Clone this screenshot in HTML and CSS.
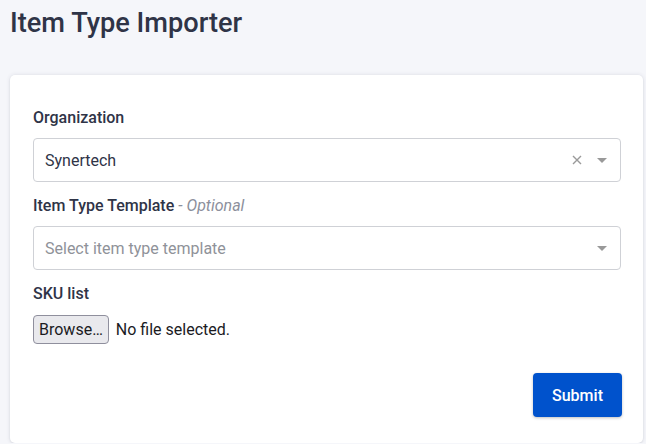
FILE: index.html
```html
<!DOCTYPE html>
<html lang="en">
<head>
<meta charset="utf-8">
<title>Item Type Importer</title>
<link rel="stylesheet" href="styles.css">
</head>
<body>
<main class="page">
  <h1 class="title">Item Type Importer</h1>
  <section class="card">
    <form class="form">
      <div class="field">
        <label class="label">Organization</label>
        <div class="select">
          <span class="value">Synertech</span>
          <span class="indicators">
            <svg class="clear" width="10" height="10" viewBox="0 0 10 10"><path d="M1 1 L9 9 M9 1 L1 9" stroke="#9a9a9a" stroke-width="1.4" fill="none"/></svg>
            <svg class="caret" width="10" height="6" viewBox="0 0 10 6"><path d="M0 0 H10 L5 5 Z" fill="#999"/></svg>
          </span>
        </div>
      </div>
      <div class="field">
        <label class="label">Item Type Template <em class="optional">- Optional</em></label>
        <div class="select">
          <span class="placeholder">Select item type template</span>
          <span class="indicators">
            <svg class="caret" width="10" height="6" viewBox="0 0 10 6"><path d="M0 0 H10 L5 5 Z" fill="#999"/></svg>
          </span>
        </div>
      </div>
      <div class="field file-field">
        <label class="label">SKU list</label>
        <div class="file">
          <button type="button" class="browse">Browse…</button>
          <span class="file-name">No file selected.</span>
        </div>
      </div>
      <div class="actions">
        <button type="button" class="submit">Submit</button>
      </div>
    </form>
  </section>
</main>
</body>
</html>
```

FILE: styles.css
```css
* { box-sizing: border-box; }
html, body { margin: 0; padding: 0; }
body {
  background: #f5f6fa;
  font-family: Roboto, "Liberation Sans", sans-serif;
  color: #2f3447;
}
.page {
  padding: 0 3px 0 10px;
}
.title {
  margin: 0;
  padding-top: 5px;
  font-size: 27.2px;
  line-height: 36px;
  font-weight: 500;
  color: #2f3447;
  height: 75px;
}
.card {
  background: #fff;
  border-radius: 5px;
  box-shadow: 0 0 4px rgba(40, 45, 70, 0.12), 0 1px 2px rgba(40, 45, 70, 0.08);
  padding: 32px 22px 26px 23px;
  height: 368px;
}
.form {
  display: flex;
  flex-direction: column;
}
.field {
  display: flex;
  flex-direction: column;
  gap: 9px;
  margin-bottom: 13px;
}
.file-field { gap: 10px; }
.label {
  font-size: 16px;
  line-height: 22px;
  font-weight: 500;
  color: #2f3447;
}
.optional {
  font-weight: 400;
  font-style: italic;
  color: #8c909c;
}
.select {
  height: 44px;
  border: 1px solid #cfd1d6;
  border-radius: 4px;
  display: flex;
  align-items: center;
  justify-content: space-between;
  padding: 0 13px 0 11px;
  font-size: 16px;
}
.value { color: #2f3447; }
.placeholder { color: #8f9299; }
.indicators {
  display: flex;
  align-items: center;
  gap: 15px;
}
.clear { display: block; }
.caret { display: block; margin-top: 1px; }
.file {
  display: flex;
  align-items: center;
  gap: 7px;
  font-size: 16px;
}
.browse {
  font-family: Roboto, "Liberation Sans", sans-serif;
  font-size: 16px;
  height: 29px;
  padding: 0 5px;
  background: #e9e9ed;
  border: 1px solid #8f8f9d;
  border-radius: 4px;
  color: #1b1b1f;
}
.file-name { color: #1b1b1f; }
.actions {
  display: flex;
  justify-content: flex-end;
  margin-top: 16px;
  margin-right: -1px;
}
.submit {
  width: 89px;
  height: 44px;
  background: #0052cc;
  color: #fff;
  border: none;
  border-radius: 4px;
  font-family: Roboto, "Liberation Sans", sans-serif;
  font-size: 16px;
  font-weight: 500;
  box-shadow: 0 1px 3px rgba(0, 0, 0, 0.25);
}
```
